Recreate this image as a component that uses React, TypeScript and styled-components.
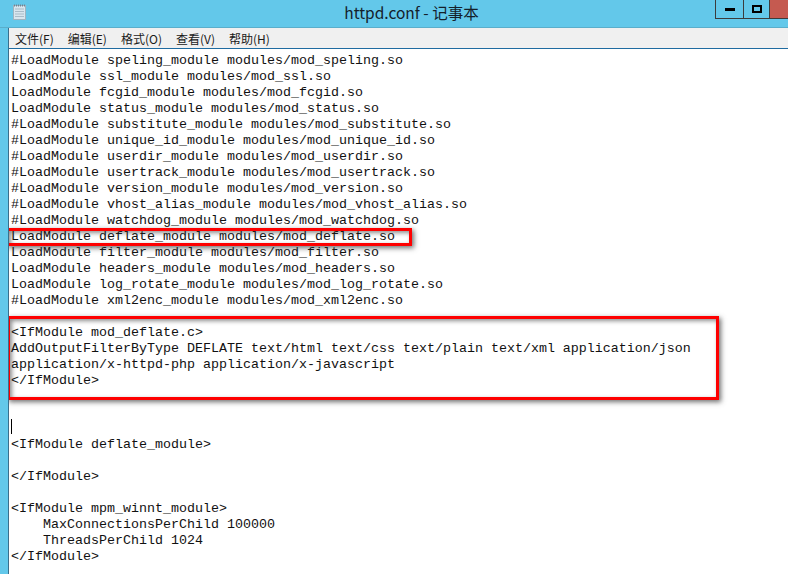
import styled, { createGlobalStyle } from "styled-components";

const GlobalStyle = createGlobalStyle`
  html, body {
    margin: 0;
    padding: 0;
    background: #fff;
  }
`;

const Page = styled.div`
  width: 788px;
  height: 574px;
  overflow: hidden;
  background: #63c8ea;
  display: flex;
  flex-direction: column;
  font-family: "Noto Sans CJK SC", "Liberation Sans", sans-serif;
`;

const TitleBar = styled.div`
  height: 27px;
  flex: none;
  position: relative;
  display: flex;
  align-items: center;
  justify-content: center;
  border-bottom: 1px solid #5aaecb;
`;

const AppIcon = styled.svg`
  position: absolute;
  left: 12px;
  top: 3px;
`;

const Title = styled.div`
  font-size: 15.5px;
  color: #14202a;
  padding-left: 35px;
  margin-top: -3px;
`;

const WindowButtons = styled.div`
  position: absolute;
  right: 0;
  top: 0;
  height: 18px;
  display: flex;
  border: 1px solid #3c3c3c;
  border-top: 0;
  border-right: 0;
`;

const WindowButton = styled.div<{ $close?: boolean; $w: number }>`
  width: ${(p) => p.$w}px;
  display: flex;
  align-items: center;
  justify-content: center;
  background: ${(p) => (p.$close ? "#c55a50" : "transparent")};
  border-right: ${(p) => (p.$close ? "0" : "1px solid #3c3c3c")};
`;

const Body = styled.div`
  flex: 1;
  margin-left: 8px;
  display: flex;
  flex-direction: column;
  min-height: 0;
  border-left: 1px solid #3a6f8c;
`;

const MenuBar = styled.div`
  height: 20px;
  flex: none;
  background: #f0f0f0;
  border-bottom: 1px solid #1f6ba0;
  display: flex;
  align-items: center;
  padding-left: 6px;
  gap: 14px;
  font-size: 12px;
  color: #1a1a1a;
`;

const Editor = styled.div`
  flex: 1;
  position: relative;
  background: #fff;
  padding: 4px 0 0 2px;
  overflow: hidden;
`;

const Code = styled.pre`
  margin: 0;
  font-family: "Liberation Mono", "Noto Sans CJK SC", monospace;
  font-size: 13.33px;
  line-height: 16px;
  color: #111;
`;

const Caret = styled.div`
  position: absolute;
  left: 2px;
  top: 370px;
  width: 1px;
  height: 15px;
  background: #000;
`;

const Highlight = styled.div<{ $x: number; $y: number; $w: number; $h: number }>`
  position: absolute;
  left: ${(p) => p.$x}px;
  top: ${(p) => p.$y}px;
  width: ${(p) => p.$w}px;
  height: ${(p) => p.$h}px;
  box-sizing: border-box;
  border: 3px solid #fe0000;
  box-shadow: 2px 2px 5px rgba(50, 50, 50, 0.7), inset 2px 2px 4px rgba(50, 50, 50, 0.55);
`;

const menus = ["文件(F)", "编辑(E)", "格式(O)", "查看(V)", "帮助(H)"];

const text = `#LoadModule speling_module modules/mod_speling.so
LoadModule ssl_module modules/mod_ssl.so
LoadModule fcgid_module modules/mod_fcgid.so
LoadModule status_module modules/mod_status.so
#LoadModule substitute_module modules/mod_substitute.so
#LoadModule unique_id_module modules/mod_unique_id.so
#LoadModule userdir_module modules/mod_userdir.so
#LoadModule usertrack_module modules/mod_usertrack.so
#LoadModule version_module modules/mod_version.so
#LoadModule vhost_alias_module modules/mod_vhost_alias.so
#LoadModule watchdog_module modules/mod_watchdog.so
LoadModule deflate_module modules/mod_deflate.so
LoadModule filter_module modules/mod_filter.so
LoadModule headers_module modules/mod_headers.so
LoadModule log_rotate_module modules/mod_log_rotate.so
#LoadModule xml2enc_module modules/mod_xml2enc.so

<IfModule mod_deflate.c>
AddOutputFilterByType DEFLATE text/html text/css text/plain text/xml application/json
application/x-httpd-php application/x-javascript
</IfModule>



<IfModule deflate_module>

</IfModule>

<IfModule mpm_winnt_module>
    MaxConnectionsPerChild 100000
    ThreadsPerChild 1024
</IfModule>`;

const App = () => {
  return (
    <Page>
      <GlobalStyle />
      <TitleBar>
        <AppIcon width="16" height="18" viewBox="0 0 16 18">
          <rect x="1.5" y="2.5" width="12" height="14" fill="#d8e6ee" stroke="#9fb4c0" />
          <path d="M3 6h9M3 8.5h9M3 11h9M3 13.5h9" stroke="#a9bcc8" />
          <path d="M2 2.5h11" stroke="#6f8494" strokeWidth="2" strokeDasharray="1 1" />
        </AppIcon>
        <Title>httpd.conf - 记事本</Title>
        <WindowButtons>
          <WindowButton $w={27}>
            <svg width="10" height="3" viewBox="0 0 10 3">
              <rect width="10" height="3" fill="#000" />
            </svg>
          </WindowButton>
          <WindowButton $w={25}>
            <svg width="10" height="8" viewBox="0 0 10 8">
              <rect x="1" y="1" width="8" height="6" fill="none" stroke="#000" strokeWidth="2" />
            </svg>
          </WindowButton>
          <WindowButton $close $w={18} />
        </WindowButtons>
      </TitleBar>
      <Body>
        <MenuBar>
          {menus.map((m) => (
            <span key={m}>{m}</span>
          ))}
        </MenuBar>
        <Editor>
          <Code>{text}</Code>
          <Caret />
          <Highlight $x={-3} $y={179} $w={406} $h={18} />
          <Highlight $x={-2} $y={267} $w={712} $h={84} />
        </Editor>
      </Body>
    </Page>
  );
};

export default App;
